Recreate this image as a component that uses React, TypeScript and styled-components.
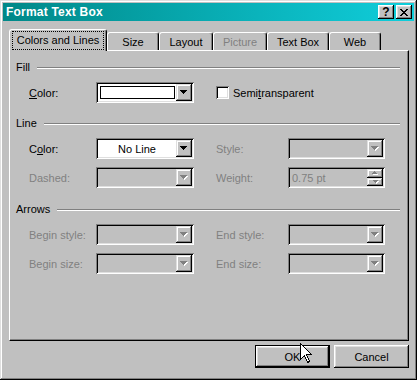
import React from 'react';
import styled, { createGlobalStyle } from 'styled-components';

const GlobalStyle = createGlobalStyle`
  html, body { margin: 0; padding: 0; background: #c0c0c0; }
  body { font-family: "Liberation Sans", Arial, sans-serif; font-size: 11px; color: #000; }
  * { box-sizing: border-box; }
`;

const Window = styled.div`
  position: relative;
  width: 417px;
  height: 380px;
  background: #c0c0c0;
  padding: 3px;
  display: flex;
  flex-direction: column;
  box-shadow: inset -1px -1px #000, inset 1px 1px #dfdfdf, inset -2px -2px #808080, inset 2px 2px #fff;
`;

const TitleBar = styled.div`
  height: 18px;
  display: flex;
  align-items: center;
  justify-content: space-between;
  padding: 0 2px 0 3px;
  background: linear-gradient(to right, #008888, #10cedb);
`;

const TitleText = styled.span`
  color: #fff;
  font-weight: bold;
  font-size: 12px;
  letter-spacing: 0.2px;
`;

const TitleButtons = styled.div`
  display: flex;
  gap: 2px;
`;

const TitleButton = styled.div`
  width: 16px;
  height: 14px;
  background: #c0c0c0;
  display: flex;
  align-items: center;
  justify-content: center;
  box-shadow: inset -1px -1px #000, inset 1px 1px #fff, inset -2px -2px #808080, inset 2px 2px #dfdfdf;
  font-weight: bold;
  font-size: 12px;
  line-height: 12px;
`;

const Body = styled.div`
  padding: 8px 5px 0 6px;
  display: flex;
  flex-direction: column;
`;

const TabStrip = styled.div`
  display: flex;
  align-items: flex-end;
  height: 21px;
  position: relative;
  z-index: 1;
`;

const Tab = styled.div<{ $w: number; $active?: boolean; $disabled?: boolean }>`
  width: ${p => p.$w}px;
  height: ${p => (p.$active ? 22 : 18)}px;
  margin-bottom: ${p => (p.$active ? -1 : 0)}px;
  background: #c0c0c0;
  border-top: 1px solid #fff;
  border-left: 1px solid #fff;
  border-right: 1px solid #000;
  border-top-left-radius: 3px;
  border-top-right-radius: 3px;
  box-shadow: inset -1px 0 #808080;
  display: flex;
  align-items: ${p => (p.$active ? 'flex-start' : 'center')};
  justify-content: center;
  padding-top: ${p => (p.$active ? 2 : 1)}px;
  color: ${p => (p.$disabled ? '#808080' : '#000')};
`;

const FocusLabel = styled.span`
  outline: 1px dotted #000;
  outline-offset: 0;
  padding: 2px 4px 3px;
  line-height: 12px;
`;

const Panel = styled.div`
  width: 400px;
  height: 291px;
  background: #c0c0c0;
  border-top: 1px solid #fff;
  border-left: 1px solid #fff;
  border-right: 1px solid #000;
  border-bottom: 1px solid #000;
  box-shadow: inset -1px -1px #808080;
  padding: 10px 8px 0 6px;
  display: flex;
  flex-direction: column;
`;

const Section = styled.div<{ $mt: number }>`
  margin-top: ${p => p.$mt}px;
  display: flex;
  flex-direction: column;
  gap: 8px;
`;

const SectionHeader = styled.div`
  height: 13px;
  display: flex;
  align-items: center;
  gap: 7px;
  line-height: 13px;
`;

const Etched = styled.div`
  flex: 1;
  height: 2px;
  border-top: 1px solid #808080;
  border-bottom: 1px solid #fff;
`;

const Row = styled.div`
  display: grid;
  grid-template-columns: 67px 98px 22px 72px 97px;
  align-items: center;
  height: 21px;
  padding-left: 13px;
`;

const Label = styled.span<{ $disabled?: boolean }>`
  color: ${p => (p.$disabled ? '#808080' : '#000')};
  white-space: nowrap;
`;

const U = styled.span`
  text-decoration: underline;
`;

const Combo = styled.div<{ $disabled?: boolean }>`
  height: 21px;
  display: flex;
  padding: 2px;
  background: ${p => (p.$disabled ? '#c0c0c0' : '#fff')};
  box-shadow: inset 1px 1px #808080, inset -1px -1px #fff, inset 2px 2px #000, inset -2px -2px #dfdfdf;
`;

const Field = styled.div<{ $center?: boolean; $disabled?: boolean }>`
  flex: 1;
  display: flex;
  align-items: center;
  justify-content: ${p => (p.$center ? 'center' : 'flex-start')};
  padding-left: ${p => (p.$center ? 0 : 2)}px;
  color: ${p => (p.$disabled ? '#808080' : '#000')};
`;

const Swatch = styled.div`
  flex: 1;
  align-self: stretch;
  margin: 2px 1px 2px 2px;
  border: 1px solid #000;
  background: #fff;
`;

const DropButton = styled.div`
  width: 16px;
  height: 17px;
  background: #c0c0c0;
  display: flex;
  align-items: center;
  justify-content: center;
  box-shadow: inset -1px -1px #000, inset 1px 1px #dfdfdf, inset -2px -2px #808080, inset 2px 2px #fff;
`;

const SpinStack = styled.div`
  width: 16px;
  display: flex;
  flex-direction: column;
`;

const SpinButton = styled.div`
  height: 8.5px;
  flex: 1;
  background: #c0c0c0;
  display: flex;
  align-items: center;
  justify-content: center;
  box-shadow: inset -1px -1px #000, inset 1px 1px #dfdfdf, inset -2px -2px #808080, inset 2px 2px #fff;
`;

const CheckRow = styled.label`
  grid-column: 4 / span 2;
  display: flex;
  align-items: center;
  gap: 4px;
`;

const CheckBox = styled.span`
  width: 13px;
  height: 13px;
  background: #fff;
  box-shadow: inset 1px 1px #808080, inset -1px -1px #fff, inset 2px 2px #000, inset -2px -2px #dfdfdf;
`;

const ButtonRow = styled.div`
  display: flex;
  justify-content: flex-end;
  gap: 4px;
  margin-top: 4px;
`;

const PushButton = styled.div<{ $default?: boolean }>`
  width: 75px;
  height: 23px;
  display: flex;
  align-items: center;
  justify-content: center;
  background: #c0c0c0;
  box-shadow: ${p =>
    p.$default
      ? 'inset 0 0 0 1px #000, inset -2px -2px #000, inset 2px 2px #fff, inset -3px -3px #808080, inset 3px 3px #dfdfdf'
      : 'inset -1px -1px #000, inset 1px 1px #fff, inset -2px -2px #808080, inset 2px 2px #dfdfdf'};
`;

const Cursor = styled.svg`
  position: absolute;
  left: 300px;
  top: 343px;
`;

const Arrow = ({ disabled, size = 7 }: { disabled?: boolean; size?: number }) => {
  const h = Math.ceil(size / 2);
  return (
    <svg width={size + 1} height={h + 1} viewBox={`0 0 ${size + 1} ${h + 1}`} shapeRendering="crispEdges">
      {disabled && <polygon points={`1,1 ${size + 1},1 ${size / 2 + 1},${h + 1}`} fill="#fff" />}
      <polygon points={`0,0 ${size},0 ${size / 2},${h}`} fill={disabled ? '#808080' : '#000'} />
    </svg>
  );
};

const UpArrow = ({ disabled }: { disabled?: boolean }) => (
  <svg width="8" height="4" viewBox="0 0 8 4" shapeRendering="crispEdges">
    {disabled && <polygon points="1,4 8,4 4.5,1" fill="#fff" />}
    <polygon points="0,3 7,3 3.5,0" fill={disabled ? '#808080' : '#000'} />
  </svg>
);

const DropCombo = ({ disabled, children, center }: { disabled?: boolean; children?: React.ReactNode; center?: boolean }) => (
  <Combo $disabled={disabled}>
    <Field $center={center} $disabled={disabled}>{children}</Field>
    <DropButton>
      <Arrow disabled={disabled} />
    </DropButton>
  </Combo>
);

export default function App() {
  return (
    <>
      <GlobalStyle />
      <Window>
        <TitleBar>
          <TitleText>Format Text Box</TitleText>
          <TitleButtons>
            <TitleButton>?</TitleButton>
            <TitleButton>
              <svg width="8" height="7" viewBox="0 0 8 7" shapeRendering="crispEdges">
                <path d="M0 0h2v1h-2zM6 0h2v1h-2zM1 1h2v1h-2zM5 1h2v1h-2zM2 2h4v1h-4zM3 3h2v1h-2zM2 4h4v1h-4zM1 5h2v1h-2zM5 5h2v1h-2zM0 6h2v1h-2zM6 6h2v1h-2z" fill="#000" />
              </svg>
            </TitleButton>
          </TitleButtons>
        </TitleBar>
        <Body>
          <TabStrip>
            <Tab $w={98} $active>
              <FocusLabel>Colors and Lines</FocusLabel>
            </Tab>
            <Tab $w={52}>Size</Tab>
            <Tab $w={54}>Layout</Tab>
            <Tab $w={54} $disabled>Picture</Tab>
            <Tab $w={62}>Text Box</Tab>
            <Tab $w={52}>Web</Tab>
          </TabStrip>
          <Panel>
            <Section $mt={0}>
              <SectionHeader>
                Fill
                <Etched />
              </SectionHeader>
              <Row>
                <Label><U>C</U>olor:</Label>
                <Combo>
                  <Swatch />
                  <DropButton>
                    <Arrow />
                  </DropButton>
                </Combo>
                <span />
                <CheckRow>
                  <CheckBox />
                  <span>Semi<U>t</U>ransparent</span>
                </CheckRow>
              </Row>
            </Section>
            <Section $mt={14}>
              <SectionHeader>
                Line
                <Etched />
              </SectionHeader>
              <Row>
                <Label>C<U>o</U>lor:</Label>
                <DropCombo center>No Line</DropCombo>
                <span />
                <Label $disabled>Style:</Label>
                <DropCombo disabled />
              </Row>
              <Row>
                <Label $disabled>Dashed:</Label>
                <DropCombo disabled />
                <span />
                <Label $disabled>Weight:</Label>
                <Combo $disabled>
                  <Field $disabled>0.75 pt</Field>
                  <SpinStack>
                    <SpinButton><UpArrow disabled /></SpinButton>
                    <SpinButton><Arrow disabled size={6} /></SpinButton>
                  </SpinStack>
                </Combo>
              </Row>
            </Section>
            <Section $mt={15}>
              <SectionHeader>
                Arrows
                <Etched />
              </SectionHeader>
              <Row>
                <Label $disabled>Begin style:</Label>
                <DropCombo disabled />
                <span />
                <Label $disabled>End style:</Label>
                <DropCombo disabled />
              </Row>
              <Row>
                <Label $disabled>Begin size:</Label>
                <DropCombo disabled />
                <span />
                <Label $disabled>End size:</Label>
                <DropCombo disabled />
              </Row>
            </Section>
          </Panel>
          <ButtonRow>
            <PushButton $default>OK</PushButton>
            <PushButton>Cancel</PushButton>
          </ButtonRow>
        </Body>
        <Cursor width="13" height="21" viewBox="0 0 13 21" shapeRendering="crispEdges">
          <path d="M0.5 0.5 L0.5 16.5 L4.5 12.5 L7.5 19.5 L9.5 18.5 L6.5 11.5 L11.5 11.5 Z" fill="#fff" stroke="#000" strokeWidth="1" />
        </Cursor>
      </Window>
    </>
  );
}
